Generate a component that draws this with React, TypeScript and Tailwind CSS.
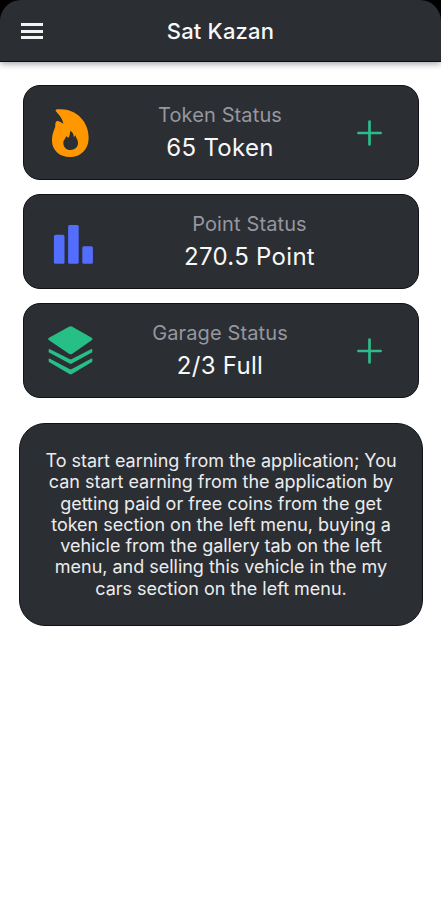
import type { ReactNode } from 'react';

function FlameIcon() {
  return (
    <svg width="37" height="48" viewBox="112 86 111 144" className="block">
      <path
        fillRule="evenodd"
        fill="#ff9800"
        d="M123 92C122 88 126 87 130 87C180 82 222 120 222 172C222 207 198 230 166 230C135 230 112 209 112 181C112 160 118 150 122 139C121 131 123 124 127 122C133 121 139 126 146 130C143 112 132 103 123 92ZM167 151C166 162 164 166 162 172C158 171 156 169 154 167C154 175 146 178 146 188C146 201 155 209 167 209C181 209 190 200 190 188C190 176 183 174 183 165C180 167 179 169 177 171C178 160 173 155 167 151Z"
      />
    </svg>
  );
}

function BarsIcon() {
  return (
    <svg width="40" height="39" viewBox="0 0 40 39" className="block" fill="#536dfe">
      <rect x="0.9" y="9.8" width="10.6" height="29" rx="1.6" />
      <rect x="15.1" y="0" width="10.6" height="38.8" rx="1.6" />
      <rect x="29.3" y="21.2" width="10.6" height="17.6" rx="1.6" />
    </svg>
  );
}

function LayersIcon() {
  return (
    <svg width="45" height="49" viewBox="99 96 135 147" className="block" fill="#26c087">
      <path d="M162 98Q167 95 172 98L230 131Q235 135 230 139L172 179Q167 183 162 179L102 139Q97 135 102 131Z" />
      <path d="M101 168Q101 164 105 166L162 194Q167 197 172 194L228 166Q232 164 232 168V175L172 208Q167 211 162 208L101 175Z" />
      <path d="M101 196Q101 192 105 194L162 224Q167 227 172 224L228 194Q232 192 232 196V203L172 239Q167 243 162 239L101 203Z" />
    </svg>
  );
}

function PlusIcon() {
  return (
    <svg width="25" height="26" viewBox="0 0 25 26" className="block" stroke="#2dbb8b" strokeWidth="2.7" strokeLinecap="round">
      <path d="M12.5 1.5V24.5M1.4 13H23.6" />
    </svg>
  );
}

type CardProps = {
  icon: ReactNode;
  iconClass: string;
  bodyClass: string;
  label: string;
  value: string;
  action?: boolean;
};

function StatusCard({ icon, iconClass, bodyClass, label, value, action }: CardProps) {
  return (
    <section className="flex h-[95px] w-[396px] items-center rounded-[17px] border border-[#101216] bg-[#2b2e33]">
      <div className={`flex w-[94px] shrink-0 ${iconClass}`}>{icon}</div>
      <div className={`flex shrink-0 flex-col items-center whitespace-nowrap pb-px ${bodyClass}`}>
        <span className="text-[20px] leading-[29px] tracking-[0.12px] text-[#96979f]">{label}</span>
        <span className="mt-[2px] text-[24px] leading-[32px] tracking-[0.3px] text-[#f8f8f9]">{value}</span>
      </div>
      {action && (
        <button aria-label="Add" className="ml-auto mr-[36px]">
          <PlusIcon />
        </button>
      )}
    </section>
  );
}

export default function App() {
  return (
    <main className="flex h-[900px] w-[441px] flex-col items-center overflow-hidden bg-white font-['Inter',sans-serif]">
      <div className="w-full shrink-0 bg-black">
        <header className="grid h-[62px] w-full grid-cols-[1fr_auto_1fr] items-center rounded-t-[21px] border-b border-[#0c0d12] bg-[#2b2e33] shadow-[0_2px_6px_rgba(30,25,50,0.4)]">
          <button aria-label="Menu" className="ml-[21px] mt-px flex w-[22px] flex-col gap-[3.5px]">
            <span className="h-[3px] bg-[#f3f3f4]" />
            <span className="h-[3px] bg-[#f3f3f4]" />
            <span className="h-[3px] bg-[#f3f3f4]" />
          </button>
          <h1 className="text-[22px] font-medium leading-[30px] tracking-[0.2px] text-[#f8f8f9]">Sat Kazan</h1>
        </header>
      </div>

      <div className="mt-[23px] flex shrink-0 flex-col gap-[14px]">
        <StatusCard
          icon={<FlameIcon />}
          iconClass="pl-[28px]"
          bodyClass="w-[205px]"
          label="Token Status"
          value="65 Token"
          action
        />
        <StatusCard
          icon={<BarsIcon />}
          iconClass="pl-[29px] pt-[6px]"
          bodyClass="w-[264px]"
          label="Point Status"
          value="270.5 Point"
        />
        <StatusCard
          icon={<LayersIcon />}
          iconClass="pl-[24px]"
          bodyClass="w-[205px]"
          label="Garage Status"
          value="2/3 Full"
          action
        />
      </div>

      <section className="mt-[25px] flex h-[203px] w-[404px] shrink-0 items-center justify-center rounded-[26px] border border-[#101216] bg-[#2b2e33]">
        <p className="ml-px flex flex-col items-center whitespace-nowrap text-[18px] leading-[21.2px] tracking-[-0.02px] text-[#ececee]">
          <span>To start earning from the application; You</span>
          <span>can start earning from the application by</span>
          <span>getting paid or free coins from the get</span>
          <span>token section on the left menu, buying a</span>
          <span>vehicle from the gallery tab on the left</span>
          <span>menu, and selling this vehicle in the my</span>
          <span>cars section on the left menu.</span>
        </p>
      </section>
    </main>
  );
}
